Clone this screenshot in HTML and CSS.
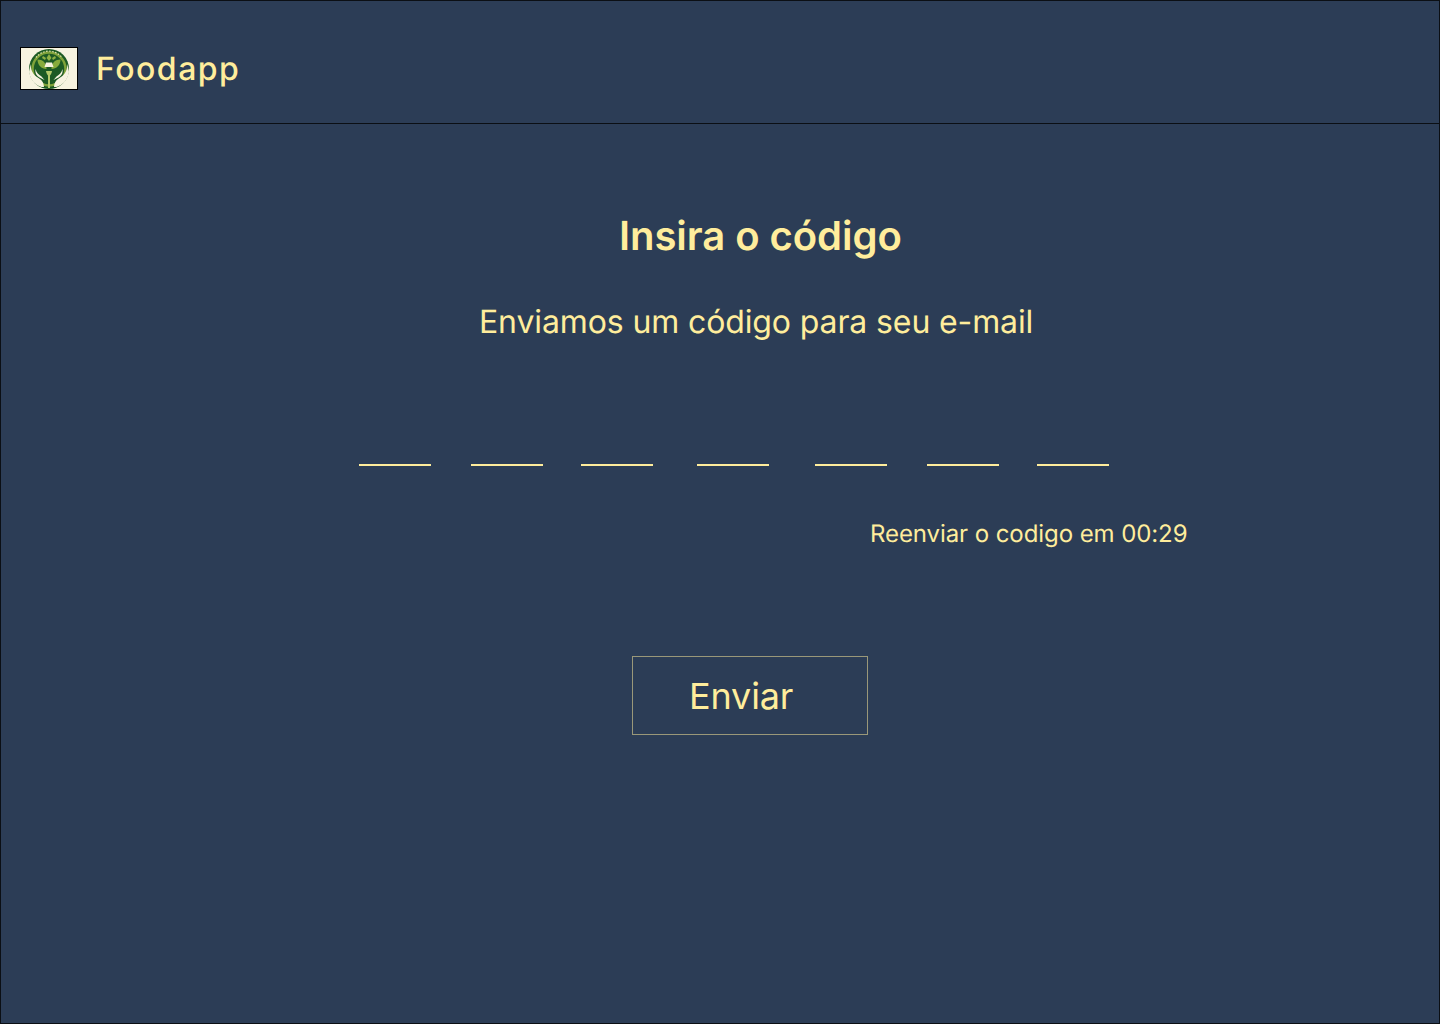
FILE: index.html
```html
<!DOCTYPE html>
<html lang="pt">
<head>
<meta charset="utf-8">
<title>Foodapp</title>
<link rel="stylesheet" href="styles.css">
</head>
<body>
<div class="frame">
  <header class="topbar">
    <div class="logo">
      <svg viewBox="0 0 56 41" width="56" height="41" aria-hidden="true">
        <rect width="56" height="41" fill="#f7f3e0"/>
        <circle cx="28" cy="21" r="20" fill="#1d5a24"/>
        <circle cx="28" cy="21" r="16.5" fill="none" stroke="#7fa23a" stroke-width="2.500"/>
        <path d="M15 9.500a16.500 16.500 0 0 1 26 0" fill="none" stroke="#dfe4b4" stroke-width="1.200" stroke-dasharray="1.500 1.500"/>
        <path d="M16.500 11.500c5 0 9 3 9 9.500-5 0-9-4-9-9.500zM39.500 11.500c-5 0-9 3-9 9.500 5 0 9-4 9-9.500z" fill="#86ab3c"/>
        <path d="M28 6l2.500 4-2.500 3-2.500-3zM22 8l3 2-1 2-3-2zM34 8l-3 2 1 2 3-2z" fill="#8fb143"/>
        <path d="M25 14.500h6l1.500 4.500h-9z" fill="#f7f3e0"/>
        <path d="M25 23h6c-.3 2-1.200 3.500-2 4.500V40h-2V27.500c-.8-1-1.700-2.500-2-4.500z" fill="#b5c96a"/>
        <path d="M9.500 16c.5 8.500 4 11.500 8 14 3 2 5 3.500 5.500 9h-2.500c-7-2-11.500-8-12.500-15zM46.500 16c-.5 8.500-4 11.500-8 14-3 2-5 3.500-5.500 9h2.500c7-2 11.500-8 12.500-15z" fill="#f7f3e0"/>
        <path d="M14.500 21c1 4 3 5.500 6 7.500l3 3.500-5-2.500c-3-2-4.500-4-4-8.500zM41.500 21c-1 4-3 5.500-6 7.500l-3 3.500 5-2.500c3-2 4.500-4 4-8.500z" fill="#f7f3e0"/>
      </svg>
    </div>
    <span class="brand">Foodapp</span>
  </header>
  <main class="content">
    <h1 class="title">Insira o código</h1>
    <p class="subtitle">Enviamos um código para seu e-mail</p>
    <div class="slots">
      <span class="slot"></span>
      <span class="slot"></span>
      <span class="slot"></span>
      <span class="slot"></span>
      <span class="slot"></span>
      <span class="slot"></span>
      <span class="slot"></span>
    </div>
    <p class="resend">Reenviar o codigo em 00:29</p>
    <button class="send" type="button">Enviar</button>
  </main>
</div>
</body>
</html>
```

FILE: styles.css
```css
* { box-sizing: border-box; }
html, body { margin: 0; height: 100%; }
body { background: #2c3d56; font-family: "Inter", sans-serif; color: #ffed9c; text-rendering: geometricPrecision; }
.frame { height: 1024px; border: 1px solid #0b0f14; display: flex; flex-direction: column; overflow: hidden; }
.topbar { height: 123px; flex: none; border-bottom: 1px solid #0b0f14; display: flex; align-items: center; padding: 12px 0 0 19px; gap: 18px; }
.logo { width: 58px; height: 43px; border: 1px solid #000; flex: none; }
.logo svg { display: block; }
.brand { font-family: "Inter", sans-serif; font-size: 32px; font-weight: 500; letter-spacing: 1.5px; }
.content { flex: 1; display: flex; flex-direction: column; align-items: flex-start; }
.title { margin: 88px 0 0 618px; font-size: 40px; line-height: 48px; font-weight: 600; letter-spacing: -0.05px; white-space: nowrap; }
.subtitle { margin: 42px 0 0 478px; font-size: 32px; line-height: 39px; font-weight: 400; letter-spacing: -0.12px; white-space: nowrap; }
.slots { display: flex; margin: 123px 0 0 358px; }
.slot { width: 72px; height: 2px; background: #ffed9c; flex: none; }
.slot:nth-child(2) { margin-left: 40px; }
.slot:nth-child(3) { margin-left: 38px; }
.slot:nth-child(4) { margin-left: 44px; }
.slot:nth-child(5) { margin-left: 46px; }
.slot:nth-child(6) { margin-left: 40px; }
.slot:nth-child(7) { margin-left: 38px; }
.resend { margin: 53px 0 0 869px; font-size: 24px; line-height: 29px; letter-spacing: -0.08px; white-space: nowrap; }
.send { margin: 108px 0 0 631px; width: 236px; height: 79px; background: transparent; border: 1px solid #9a9879; color: #ffed9c; font: 400 36px/44px "Inter", sans-serif; letter-spacing: -0.15px; text-align: left; padding: 0 0 0 56px; }
```
